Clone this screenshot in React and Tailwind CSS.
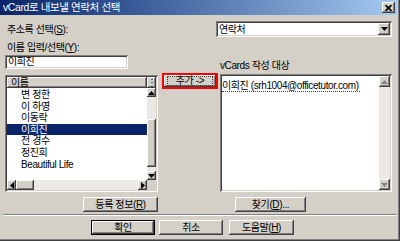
import React from 'react';

const sunken =
  'shadow-[inset_1px_1px_0_#808080,inset_-1px_-1px_0_#ffffff,inset_2px_2px_0_#404040,inset_-2px_-2px_0_#d4d0c8]';
const raised =
  'shadow-[inset_-1px_-1px_0_#404040,inset_1px_1px_0_#ffffff,inset_-2px_-2px_0_#808080,inset_2px_2px_0_#d4d0c8]';

function Tri({ dir = 'down', color = '#000' }) {
  const d = {
    up: 'M3.5 0 L7 4 L0 4 Z',
    down: 'M0 0 L7 0 L3.5 4 Z',
    left: 'M4 0 L4 7 L0 3.5 Z',
    right: 'M0 0 L4 3.5 L0 7 Z',
  }[dir];
  const horiz = dir === 'left' || dir === 'right';
  return (
    <svg width={horiz ? 4 : 7} height={horiz ? 7 : 4} viewBox={horiz ? '0 0 4 7' : '0 0 7 4'}>
      <path d={d} fill={color} />
    </svg>
  );
}

function ArrowBtn({ dir, className = '', disabled }) {
  return (
    <div className={`bg-[#d4d0c8] flex items-center justify-center ${raised} ${className}`}>
      <Tri dir={dir} color={disabled ? '#808080' : '#000'} />
    </div>
  );
}

function Button({ children, className = '' }) {
  return (
    <div className={`h-[15px] bg-[#d4d0c8] flex items-center justify-center leading-none ${raised} ${className}`}>
      {children}
    </div>
  );
}

const names = ['변 정한', '이 하영', '이동락', '이희진', '전 경수', '정진희', 'Beautiful Life'];

export default function App() {
  return (
    <div className="w-[400px] h-[241px] bg-[#d4d0c8] flex flex-col text-[10px] tracking-[-0.4px] text-black font-['Liberation_Sans','Noto_Sans_CJK_KR',sans-serif] shadow-[inset_-1px_-1px_0_#404040,inset_-2px_-2px_0_#808080] overflow-hidden">
      {/* Title bar */}
      <div className="h-[15px] mr-[3px] flex items-center justify-between pl-[3px] pr-[2px] bg-linear-to-r from-[#0a246a] to-[#a6caf0] text-white text-[10.5px]">
        <span>vCard로 내보낼 연락처 선택</span>
        <div className={`w-[13px] h-[11px] bg-[#d4d0c8] flex items-center justify-center ${raised}`}>
          <svg width="7" height="6" viewBox="0 0 7 6">
            <path d="M0.5 0 L6.5 6 M6.5 0 L0.5 6" stroke="#000" strokeWidth="1.6" />
          </svg>
        </div>
      </div>

      {/* Address book row */}
      <div className="mt-[6px] h-[16px] flex items-center pl-[7px] pr-[8px]">
        <span>
          주소록 선택(<span className="underline">S</span>):
        </span>
        <div className={`ml-auto w-[176px] h-[16px] bg-white flex items-center pl-[3px] pr-[2px] ${sunken}`}>
          <span className="flex-1">연락처</span>
          <ArrowBtn dir="down" className="w-[12px] h-[12px]" />
        </div>
      </div>

      {/* Main row */}
      <div className="mt-[4px] flex pl-[5px]">
        {/* Left column */}
        <div className="w-[153px] flex flex-col">
          <div className="h-[13px] leading-[13px] pl-[2px]">
            이름 입력/선택(<span className="underline">Y</span>):
          </div>
          <div className={`mt-[1px] w-[123px] h-[14px] bg-white px-[3px] leading-[14px] ${sunken}`}>이희진</div>
          <div className={`mt-[6px] h-[117px] p-[2px] flex flex-col ${sunken}`}>
            <div className="h-[11px] flex">
              <div className={`flex-1 pl-[4px] flex items-center leading-none ${raised}`}>이름</div>
              <div className={`w-[9px] flex items-center justify-center leading-none ${raised}`}>⋮</div>
            </div>
            <div className="flex flex-1 bg-white">
              <div className="flex-1 pt-[1px]">
                {names.map((n) => (
                  <div
                    key={n}
                    className={`h-[11.6px] leading-[11.6px] pl-[14px] ${
                      n === '이희진' ? 'bg-[#0a246a] text-white' : ''
                    }`}
                  >
                    {n}
                  </div>
                ))}
              </div>
              <div className="w-[9px] flex flex-col bg-[#ece9e4]">
                <ArrowBtn dir="up" className="h-[9px]" />
                <div className="h-[22px]" />
                <div className={`h-[48px] bg-[#d4d0c8] ${raised}`} />
                <div className="flex-1" />
                <ArrowBtn dir="down" className="h-[9px]" />
              </div>
            </div>
            <div className="h-[10px] flex">
              <div className="flex-1 flex bg-[#ece9e4]">
                <ArrowBtn dir="left" className="w-[9px]" />
                <div className={`w-[18px] bg-[#d4d0c8] ${raised}`} />
                <div className="flex-1" />
                <ArrowBtn dir="right" className="w-[9px]" />
              </div>
              <div className="w-[9px] bg-[#d4d0c8]" />
            </div>
          </div>
        </div>

        {/* Middle column */}
        <div className="ml-[4px] w-[56px] pt-[32px]">
          <div className="h-[16px] border-2 border-[#ff0000]">
            <div className={`h-full bg-[#d4d0c8] px-[3px] py-[1px] ${raised}`}>
              <div className="h-full border border-dotted border-[#404040] flex items-center justify-center leading-none">
                추가 -&gt;
              </div>
            </div>
          </div>
        </div>

        {/* Right column */}
        <div className="ml-[2px] w-[172px] pt-[19px] flex flex-col">
          <div className="h-[14px] leading-[12px]">vCards 작성 대상</div>
          <div className={`h-[118px] p-[2px] flex bg-white ${sunken}`}>
            <div className="flex-1 pt-[2px]">
              <span className="inline-block leading-[10px] border-b border-dotted border-[#404040] pr-[1px]">
                이희진 (srh1004@officetutor.com)
              </span>
            </div>
            <div className="w-[11px] flex flex-col bg-[#ece9e4]">
              <ArrowBtn dir="up" disabled className="h-[11px]" />
              <div className="flex-1" />
              <ArrowBtn dir="down" disabled className="h-[11px]" />
            </div>
          </div>
        </div>
      </div>

      {/* Details / Find buttons */}
      <div className="mt-[5px] flex">
        <Button className="ml-[83px] w-[75px]">
          <span>
            등록 정보(<span className="underline">R</span>)
          </span>
        </Button>
        <Button className="ml-[77px] w-[71px]">
          <span>
            찾기(<span className="underline">D</span>)...
          </span>
        </Button>
      </div>

      <div className="mt-[2px] mx-[3px] border-t border-b border-t-[#808080] border-b-white" />

      {/* Bottom buttons */}
      <div className="mt-[4px] flex">
        <div className="ml-[91px] w-[64px] h-[15px] border border-black">
          <div className={`h-full bg-[#d4d0c8] flex items-center justify-center leading-none ${raised}`}>확인</div>
        </div>
        <Button className="ml-[4px] w-[64px]">취소</Button>
        <Button className="ml-[6px] w-[65px]">
          <span>
            도움말(<span className="underline">H</span>)
          </span>
        </Button>
      </div>
    </div>
  );
}
